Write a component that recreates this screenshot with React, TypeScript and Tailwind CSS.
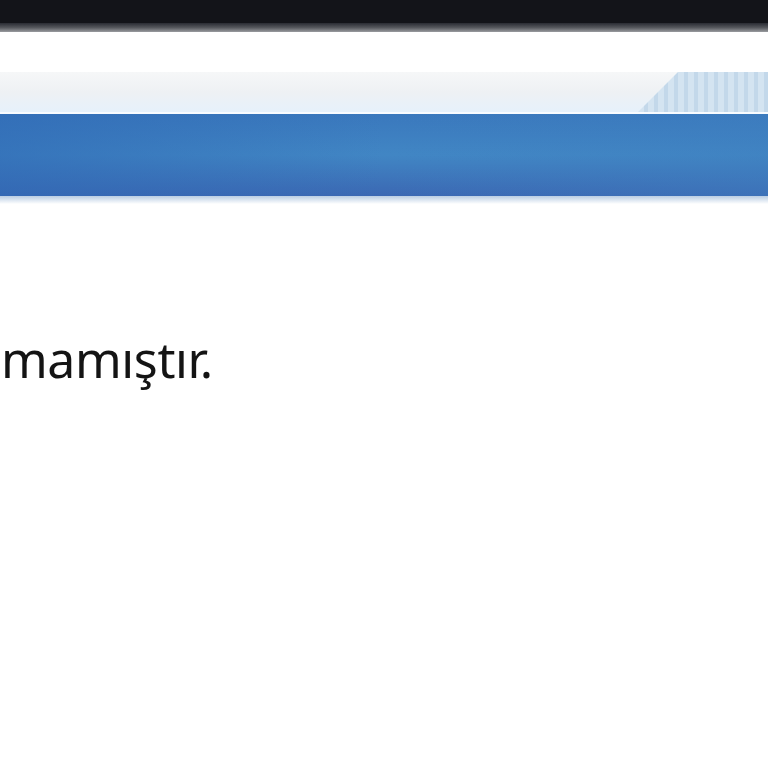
export default function App() {
  return (
    <div className="w-[768px] h-[768px] bg-white overflow-hidden" style={{ fontFamily: '"Noto Sans", "Open Sans", sans-serif' }}>
      <div className="h-[23px] bg-[#131419]" />
      <div className="h-[9px] bg-gradient-to-b from-[#2a2c33] via-[#55575c] to-[#9a9ca0]" />
      <div className="h-[40px] bg-white" />
      <div className="h-[40px] flex bg-gradient-to-b from-[#f6f7f8] via-[#eef1f4] to-[#e6f1fb]">
        <div className="flex-1" />
        <div className="w-[130px] [clip-path:polygon(40px_0,100%_0,100%_100%,0_100%)] bg-[repeating-linear-gradient(90deg,#d4e4f1_0px,#d4e4f1_6px,#c3d8ea_6px,#c3d8ea_10px)]" />
      </div>
      <div className="h-[2px] bg-[#f8fbff]" />
      <div className="h-[82px] bg-gradient-to-b from-[#3a78bd] via-[#4186c4] to-[#3b68b3]">
        <div className="h-full bg-gradient-to-r from-[#2f69b5]/60 via-transparent to-[#3f80c0]/40" />
      </div>
      <div className="h-[8px] bg-gradient-to-b from-[#b9cde3] to-white" />
      <div className="pt-[125px] pl-[1px] text-[50px] leading-[60px] text-[#141414] tracking-[-0.4px]">
        mamıştır.
      </div>
    </div>
  );
}
